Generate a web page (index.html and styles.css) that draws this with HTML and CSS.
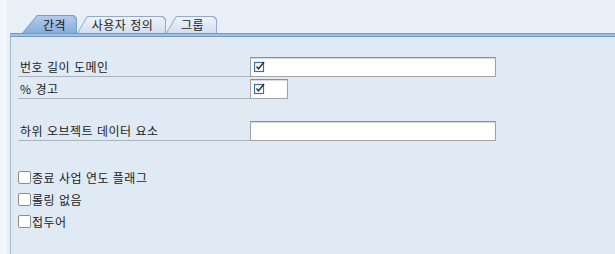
FILE: index.html
```html
<!DOCTYPE html>
<html lang="ko">
<head>
    <meta charset="UTF-8">
    <meta name="viewport" content="width=device-width, initial-scale=1.0">
    <title>간격</title>
    <link rel="stylesheet" href="styles.css">
</head>
<body>
    <div class="window">
        <div class="edge"></div>
        <div class="main">
            <div class="tabbar">
                <div class="tab active tab-1"><div class="tab-face">간격</div></div>
                <div class="tab tab-2"><div class="tab-face">사용자 정의</div></div>
                <div class="tab tab-3"><div class="tab-face">그룹</div></div>
            </div>
            <div class="tabline"></div>

            <div class="panel">
                <div class="row">
                    <div class="field-label">번호 길이 도메인</div>
                    <div class="field wide">
                        <svg class="check-icon" width="12" height="12" viewBox="0 0 12 12">
                            <rect x="0.5" y="1.5" width="9" height="9" fill="none" stroke="#3a6ea5" stroke-width="1.2"/>
                            <path d="M2.5 5.5 L4.5 7.8 L10 1" fill="none" stroke="#333" stroke-width="1.4"/>
                        </svg>
                    </div>
                </div>
                <div class="row">
                    <div class="field-label">% 경고</div>
                    <div class="field narrow">
                        <svg class="check-icon" width="12" height="12" viewBox="0 0 12 12">
                            <rect x="0.5" y="1.5" width="9" height="9" fill="none" stroke="#3a6ea5" stroke-width="1.2"/>
                            <path d="M2.5 5.5 L4.5 7.8 L10 1" fill="none" stroke="#333" stroke-width="1.4"/>
                        </svg>
                    </div>
                </div>
                <div class="row spaced">
                    <div class="field-label">하위 오브젝트 데이터 요소</div>
                    <div class="field wide"></div>
                </div>

                <div class="checks">
                    <label class="check"><span class="box"></span>종료 사업 연도 플래그</label>
                    <label class="check"><span class="box"></span>롤링 없음</label>
                    <label class="check"><span class="box"></span>접두어</label>
                </div>
            </div>
        </div>
    </div>
</body>
</html>
```

FILE: styles.css
```css
html, body {
    margin: 0;
    height: 100%;
}
body {
    font-family: "Noto Sans CJK KR", "Noto Sans", sans-serif;
    font-size: 12px;
    letter-spacing: 0.5px;
    color: #1a1a1a;
    background-color: #e9eff7;
}
.window {
    display: flex;
    height: 100%;
}
.edge {
    width: 7px;
    background-color: #f4f7fb;
}
.main {
    flex: 1;
    display: flex;
    flex-direction: column;
}

/* tabs */
.tabbar {
    height: 33px;
    display: flex;
    align-items: flex-end;
    padding-left: 15px;
}
.tab {
    height: 17px;
    padding: 1px 1px 0 1px;
    background: #93abc9;
    clip-path: polygon(0 100%, 10px 0, calc(100% - 3px) 0, 100% 3px, 100% 100%);
}
.tab-face {
    height: 100%;
    display: flex;
    align-items: center;
    justify-content: center;
    padding-left: 2px;
    box-sizing: border-box;
    line-height: 1;
    background: linear-gradient(#eef3fa, #d3dfee);
    clip-path: polygon(0 100%, 9.5px 0, calc(100% - 3px) 0, 100% 3px, 100% 100%);
}
.tab.active {
    height: 18px;
    background: #7d9dc8;
    clip-path: polygon(0 100%, 15px 0, calc(100% - 3px) 0, 100% 3px, 100% 100%);
}
.tab.active .tab-face {
    background: linear-gradient(#b2cbea, #89acd9);
    padding-left: 10px;
    clip-path: polygon(0 100%, 14.5px 0, calc(100% - 3px) 0, 100% 3px, 100% 100%);
}
.tab-1 { width: 55px; box-sizing: border-box; }
.tab-2 { width: 89px; box-sizing: border-box; }
.tab-3 { width: 51px; box-sizing: border-box; }

.tabline {
    margin-left: 3px;
    height: 2px;
    background-color: #a0bfe6;
    border-top: 1px solid #7399cb;
    border-bottom: 1px solid #7399cb;
}

/* panel */
.panel {
    flex: 1;
    margin-left: 3px;
    background-color: #dfeaf5;
    border-left: 1px solid #a7b9ce;
    padding: 20px 0 0 7px;
}
.row {
    display: flex;
    align-items: flex-end;
    height: 20px;
    margin-bottom: 2px;
}
.row.spaced {
    margin-top: 22px;
}
.field-label {
    width: 230px;
    height: 19px;
    padding-left: 2px;
    display: flex;
    align-items: center;
    border-bottom: 1px solid #aab2bc;
    line-height: 1;
}
.field {
    height: 20px;
    box-sizing: border-box;
    background: #fff;
    border: 1px solid #a3a3a3;
    border-top-color: #8e8e8e;
    box-shadow: inset 0 1px 1px #d8d8d8;
    display: flex;
    align-items: center;
    padding-left: 3px;
}
.field.wide { width: 246px; }
.field.narrow { width: 38px; }

.checks {
    margin-top: 30px;
    display: flex;
    flex-direction: column;
    gap: 9px;
}
.check {
    display: flex;
    align-items: center;
    height: 13px;
    line-height: 1;
}
.box {
    width: 13px;
    height: 13px;
    box-sizing: border-box;
    border: 1px solid #8c8c8c;
    border-radius: 2px;
    background: #fff;
    margin-right: 1px;
}
```
